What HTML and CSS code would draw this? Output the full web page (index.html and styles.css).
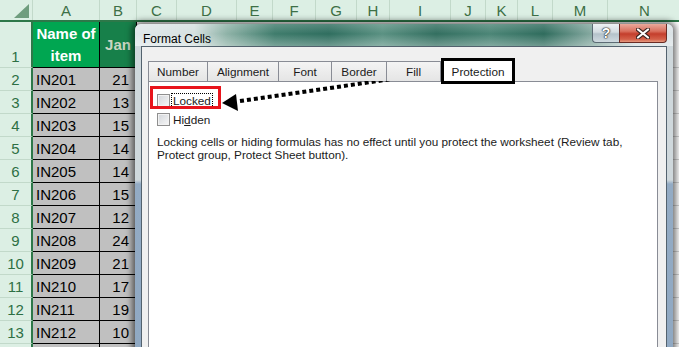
FILE: index.html
```html
<!DOCTYPE html>
<html lang="en">

<head>
    <meta charset="UTF-8">
    <meta name="viewport" content="width=device-width, initial-scale=1.0">
    <title>Format Cells - Protection</title>
    <link rel="stylesheet" href="styles.css">
</head>

<body>
    <div class="sheet">
        <div class="col-heads">
            <div class="corner"></div>
            <div>A</div>
            <div>B</div>
            <div>C</div>
            <div>D</div>
            <div>E</div>
            <div>F</div>
            <div>G</div>
            <div>H</div>
            <div>I</div>
            <div>J</div>
            <div>K</div>
            <div>L</div>
            <div>M</div>
            <div>N</div>
        </div>

        <div class="row tall">
            <div class="rh">1</div>
            <div class="cell head-a">Name of<br>item</div>
            <div class="cell head-b">Jan</div>
            <div class="rest"></div>
        </div>
        <div class="row">
            <div class="rh">2</div>
            <div class="cell">IN201</div>
            <div class="cell num">21</div>
            <div class="rest"></div>
        </div>
        <div class="row">
            <div class="rh">3</div>
            <div class="cell">IN202</div>
            <div class="cell num">13</div>
            <div class="rest"></div>
        </div>
        <div class="row">
            <div class="rh">4</div>
            <div class="cell">IN203</div>
            <div class="cell num">15</div>
            <div class="rest"></div>
        </div>
        <div class="row">
            <div class="rh">5</div>
            <div class="cell">IN204</div>
            <div class="cell num">14</div>
            <div class="rest"></div>
        </div>
        <div class="row">
            <div class="rh">6</div>
            <div class="cell">IN205</div>
            <div class="cell num">14</div>
            <div class="rest"></div>
        </div>
        <div class="row">
            <div class="rh">7</div>
            <div class="cell">IN206</div>
            <div class="cell num">15</div>
            <div class="rest"></div>
        </div>
        <div class="row">
            <div class="rh">8</div>
            <div class="cell">IN207</div>
            <div class="cell num">12</div>
            <div class="rest"></div>
        </div>
        <div class="row">
            <div class="rh">9</div>
            <div class="cell">IN208</div>
            <div class="cell num">24</div>
            <div class="rest"></div>
        </div>
        <div class="row">
            <div class="rh">10</div>
            <div class="cell">IN209</div>
            <div class="cell num">21</div>
            <div class="rest"></div>
        </div>
        <div class="row">
            <div class="rh">11</div>
            <div class="cell">IN210</div>
            <div class="cell num">17</div>
            <div class="rest"></div>
        </div>
        <div class="row">
            <div class="rh">12</div>
            <div class="cell">IN211</div>
            <div class="cell num">19</div>
            <div class="rest"></div>
        </div>
        <div class="row">
            <div class="rh">13</div>
            <div class="cell">IN212</div>
            <div class="cell num">10</div>
            <div class="rest"></div>
        </div>
        <!-- next row only peeks in at the bottom edge -->
        <div class="row">
            <div class="rh"></div>
            <div class="cell"></div>
            <div class="cell"></div>
            <div class="rest"></div>
        </div>
    </div>

    <!-- Format Cells dialog, floating over the sheet -->
    <div class="dialog">
        <div class="titlebar">
            <span class="title">Format Cells</span>
            <div class="caption-btns">
                <div class="cap help">?</div>
                <div class="cap close">
                    <svg width="14" height="11" viewBox="0 0 14 11">
                        <path d="M2 1.5 L12 9.5 M12 1.5 L2 9.5" stroke="#3a2320" stroke-width="4.2" stroke-linecap="round" />
                        <path d="M2 1.5 L12 9.5 M12 1.5 L2 9.5" stroke="#fff" stroke-width="2.2" stroke-linecap="round" />
                    </svg>
                </div>
            </div>
        </div>
        <div class="frame">
            <div class="client">
                <div class="tabs">
                    <div class="tab">Number</div>
                    <div class="tab tab-align">Alignment</div>
                    <div class="tab tab-font">Font</div>
                    <div class="tab tab-border">Border</div>
                    <div class="tab tab-fill">Fill</div>
                    <div class="tab active">Protection</div>
                </div>
                <div class="panel">
                    <div class="mark-red"></div>
                    <div class="check">
                        <span class="box"></span>
                        <span class="focus"><u>L</u>ocked</span>
                    </div>
                    <div class="check">
                        <span class="box"></span>
                        <span>Hi<u>d</u>den</span>
                    </div>
                    <p class="note">Locking cells or hiding formulas has no effect until you protect the worksheet (Review tab,<br>Protect group, Protect Sheet button).</p>
                </div>
            </div>
        </div>
    </div>

    <!-- dotted annotation arrow -->
    <svg class="arrow" width="679" height="347" viewBox="0 0 679 347">
        <line x1="240" y1="101" x2="437" y2="72.5" stroke="#000" stroke-width="4" stroke-dasharray="4 3" />
        <polygon points="222,103 236,94 238,111" fill="#000" />
    </svg>
</body>

</html>
```

FILE: styles.css
```css
body {
    margin: 0;
    width: 679px;
    height: 347px;
    overflow: hidden;
    position: relative;
    background: #fff;
    font-family: "Liberation Sans", Arial, sans-serif;
}

.sheet {
    width: 679px;
    height: 347px;
    overflow: hidden;
}

/* column headers */
.col-heads {
    display: grid;
    grid-template-columns: 33px 67px 37px 40px 60px 36px 43px 41px 33px 61px 35px 32px 35px 55px 74px;
    height: 20px;
    background: #dcefe4;
    border-bottom: 2px solid #2d7849;
}

.col-heads div {
    display: flex;
    align-items: center;
    justify-content: center;
    border-right: 1px solid #c2d9ca;
    font-size: 15px;
    color: #3d7046;
}

.col-heads .corner {
    position: relative;
}

.corner::after {
    content: "";
    position: absolute;
    right: 3px;
    bottom: 2px;
    width: 15px;
    height: 14px;
    background: #6f9d7e;
    clip-path: polygon(100% 0, 100% 100%, 0 100%);
}

/* rows */
.row {
    display: grid;
    grid-template-columns: 33px 67px 37px 1fr;
    height: 23px;
}

.row.tall {
    height: 46px;
}

.rh {
    display: flex;
    align-items: center;
    justify-content: center;
    background: #dcefe4;
    border-bottom: 1px solid #c2d9ca;
    border-right: 2px solid #2d7849;
    font-size: 15px;
    color: #2e6f44;
}

.row.tall .rh {
    align-items: flex-end;
    padding-bottom: 2px;
}

.cell {
    display: flex;
    align-items: center;
    padding: 0 3px;
    background: #c0c0c0;
    border-right: 1px solid #000;
    border-bottom: 1px solid #000;
    font-size: 15px;
    color: #000;
}

.cell.num {
    justify-content: flex-end;
    padding-right: 7px;
}

.head-a {
    justify-content: center;
    text-align: center;
    line-height: 22px;
    background: #00a651;
    color: #fff;
    font-weight: bold;
}

.head-b {
    justify-content: center;
    background: #17804a;
    color: #c9d5c2;
    font-weight: bold;
}

.rest {
    background: #fff;
    border-bottom: 1px solid #d4d4d4;
}

/* dialog window */
.dialog {
    position: absolute;
    left: 135px;
    top: 24px;
    width: 538px;
    height: 340px;
    display: flex;
    flex-direction: column;
    border-radius: 6px 6px 0 0;
    box-shadow: 0 0 6px 3px rgba(0, 0, 0, 0.55);
    background: #c9d3d8;
}

.titlebar {
    height: 26px;
    display: flex;
    justify-content: space-between;
    border-radius: 6px 6px 0 0;
    background:
        linear-gradient(to bottom, rgba(255, 255, 255, 0.18), rgba(255, 255, 255, 0) 45%, rgba(255, 255, 255, 0.3)),
        linear-gradient(to right, #dfe7ea 0, #d6e1e0 11%, #8fb3a8 17%, #3f7c6c 26%, #2f6e5f 36%, #5a9182 46%, #336f60 56%, #4b8576 66%, #2f6c5d 76%, #8fb0a8 86%, #d3dde0 93%, #dbe3e6 100%);
}

.title {
    padding: 8px 0 0 8px;
    font-size: 12px;
    line-height: 14px;
    color: #000;
}

.caption-btns {
    display: flex;
    margin-right: 6px;
}

.cap {
    height: 18px;
    display: flex;
    align-items: center;
    justify-content: center;
    border: 1px solid #5c6b74;
    border-top: none;
}

.cap.help {
    width: 26px;
    border-radius: 0 0 0 4px;
    border-right: none;
    background: linear-gradient(to bottom, #eef2f4 0, #d3dce1 45%, #b4c2ca 55%, #cfdae0 100%);
    color: #fff;
    font-weight: bold;
    font-size: 14px;
    text-shadow: 0 0 1px #222, 0 0 1px #222, 0 0 2px #222;
}

.cap.close {
    width: 46px;
    border-radius: 0 0 4px 0;
    border-color: #6a2b24;
    background: linear-gradient(to bottom, #eaa99c 0, #d9705e 40%, #c43e2c 55%, #d4614a 85%, #e59a80 100%);
}

.frame {
    flex: 1;
    padding: 0 6px;
    background: linear-gradient(to bottom, #cfd8dc 0, #cfd8dc 134px, #93abc4 138px, #8fa8c2 100%);
}

.client {
    height: 100%;
    box-sizing: border-box;
    padding: 12px 8px 0 6px;
    background: #f0f0f0;
    border: 1px solid #53626e;
    border-bottom: none;
}

/* tabs */
.tabs {
    display: flex;
    align-items: flex-end;
    height: 22px;
    position: relative;
    z-index: 1;
    font-size: 11.75px;
    color: #1b1b1b;
}

.tab {
    width: 58px;
    height: 19px;
    margin-right: -1px;
    display: flex;
    align-items: center;
    justify-content: center;
    border: 1px solid #898c95;
    border-bottom: none;
    background: linear-gradient(to bottom, #f4f4f4, #e5e5e5);
}

.tab-align {
    width: 70px;
}

.tab-font {
    width: 52px;
}

.tab-border {
    width: 54px;
}

.tab-fill {
    width: 53px;
}

.tab.active {
    width: 68px;
    height: 20px;
    margin-left: 1px;
    margin-bottom: -3px;
    border: 3px solid #000;
    background: #fff;
}

.panel {
    position: relative;
    height: 300px;
    padding: 9px 8px 0;
    background: #fff;
    border: 1px solid #898c95;
    font-size: 11.75px;
    color: #1b1b1b;
}

.check {
    display: flex;
    align-items: center;
    height: 19px;
    line-height: 13px;
}

.box {
    width: 11px;
    height: 11px;
    margin-right: 3px;
    border: 1px solid #8f8f8f;
    background: linear-gradient(135deg, #d2d5da, #f7f7f7);
    box-shadow: inset 0 0 0 1px #f2f2f2;
}

.focus {
    outline: 1px dotted #000;
    padding: 0 1px;
    margin-left: -1px;
}

.note {
    margin: 6px 0 0;
    line-height: 13px;
}

.mark-red {
    position: absolute;
    left: 1px;
    top: 4px;
    width: 65px;
    height: 17px;
    border: 3px solid #e8141c;
}

.arrow {
    position: absolute;
    left: 0;
    top: 0;
    pointer-events: none;
}
```
